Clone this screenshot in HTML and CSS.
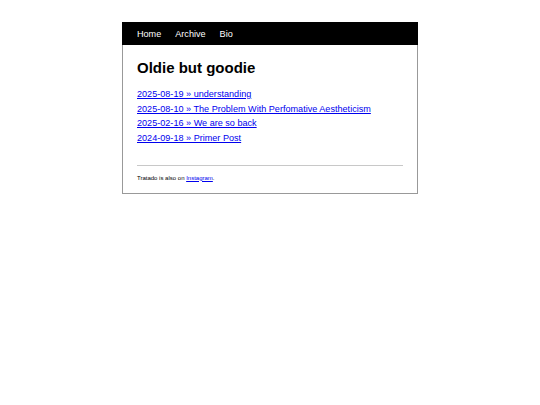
FILE: index.html
```html
<!DOCTYPE html>
<html lang="en">
<head>
<meta charset="utf-8">
<title>Oldie but goodie</title>
<link rel="stylesheet" href="styles.css">
</head>
<body>
<div class="page">
  <nav class="nav">
    <a href="#">Home</a>
    <a href="#">Archive</a>
    <a href="#">Bio</a>
  </nav>
  <main class="content">
    <h1 class="title">Oldie but goodie</h1>
    <ul class="posts">
      <li><a href="#">2025-08-19 » understanding</a></li>
      <li><a href="#">2025-08-10 » The Problem With Perfomative Aestheticism</a></li>
      <li><a href="#">2025-02-16 » We are so back</a></li>
      <li><a href="#">2024-09-18 » Primer Post</a></li>
    </ul>
    <footer class="footer">
      <p>Tratado is also on <a href="#">Instagram</a>.</p>
    </footer>
  </main>
</div>
</body>
</html>
```

FILE: styles.css
```css
html, body {
  margin: 0;
  padding: 0;
  background: #fff;
}
body {
  font-family: "Liberation Sans", Arial, sans-serif;
  color: #000;
  padding-top: 22px;
}
.page {
  width: 294px;
  margin: 0 auto;
  border: 1px solid #999;
  border-top: none;
}
.nav {
  background: #000;
  height: 23px;
  margin: 0 -1px;
  padding: 0 15px;
  display: flex;
  align-items: center;
  gap: 14px;
}
.nav a {
  color: #fff;
  text-decoration: none;
  font-size: 9.1px;
}
.content {
  padding: 14px 14px 12px 14px;
}
.title {
  font-size: 15px;
  font-weight: bold;
  margin: 0 0 11px 0;
  line-height: 17px;
}
.posts {
  list-style: none;
  margin: 0;
  padding: 0;
  font-size: 9.1px;
  line-height: 14.67px;
}
.posts a {
  color: #0000ee;
}
.footer {
  margin-top: 19px;
  border-top: 1px solid #c8c8c8;
  font-size: 6px;
}
.footer p {
  margin: 9px 0 0 0;
}
.footer a {
  color: #0000ee;
}
```
